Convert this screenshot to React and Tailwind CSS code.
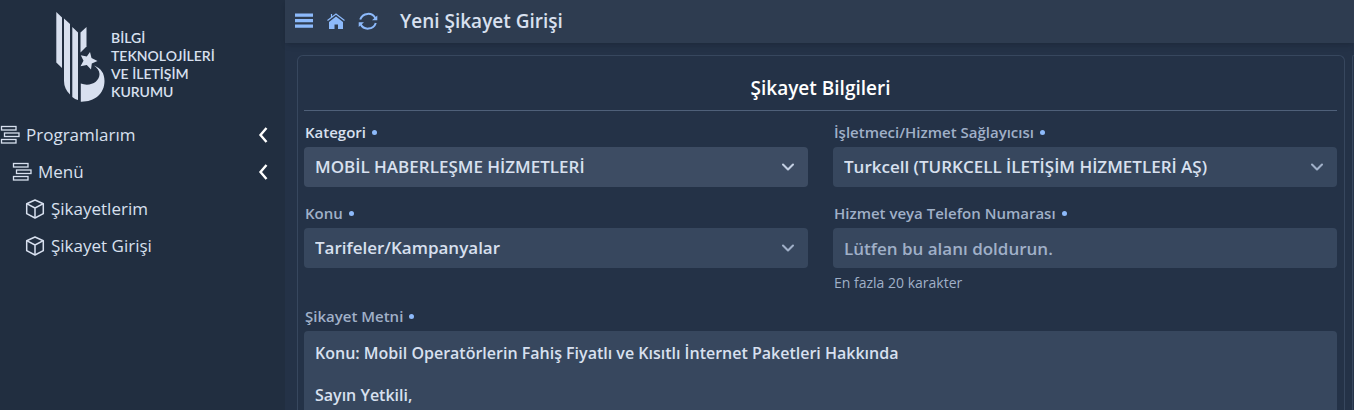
import { ChevronDown } from "lucide-react";

const menuItems = ["Şikayetlerim", "Şikayet Girişi"];

function Logo() {
  return (
    <svg viewBox="0 0 49 90" className="h-[90px] w-[49px] shrink-0" fill="#d8e0ef">
      <path d="M0.300 0L6 5.500V56L0.300 50.500Z" />
      <path d="M8 6.500L14 12V82.500C10 79 8 74 8 69Z" />
      <path d="M16.300 15L22 20.500V88C20 87.500 18 86.500 16.300 85Z" />
      <path d="M24.500 20.500L30.500 15V34.500L24.500 40.500Z" />
      <path d="M34 40L35.500 46L41.500 49L35.800 51.500L35 57.500L30.800 53L24.500 54.300L27.500 48.800L24.800 43.200L30.800 44.500Z" />
      <path d="M38 53.500C45 56.500 48.500 61 48.500 69C48.500 82 38 90 24.800 89.700V71.500C34 75 43.500 70 43.500 62C43.300 58.500 41.500 56 38 53.500Z" />
    </svg>
  );
}

function StackIcon() {
  return (
    <svg viewBox="0 0 20 20" className="size-5 shrink-0" fill="none" stroke="currentColor" strokeWidth="1.300">
      <rect x="1.500" y="1.500" width="14.500" height="3.500" />
      <rect x="4.500" y="8" width="14.500" height="3.500" />
      <rect x="1.500" y="14.500" width="14.500" height="3.500" />
    </svg>
  );
}

function BoxIcon() {
  return (
    <svg viewBox="0 0 20 20" className="size-5 shrink-0" fill="none" stroke="currentColor" strokeWidth="1.500" strokeLinejoin="round">
      <path d="M10 1L18.300 4.700V14.700L10 19L1.700 14.700V4.700Z" />
      <path d="M1.700 4.700L10 9L18.300 4.700M10 9V19" />
    </svg>
  );
}

function MenuGroup({ label, className }) {
  return (
    <button className={`flex h-[37px] w-full items-center gap-1.5 pr-[17px] text-left ${className}`}>
      <StackIcon />
      <span className="flex-1">{label}</span>
      <svg viewBox="0 0 10 16" className="h-4 w-2.5 text-white" fill="none" stroke="currentColor" strokeWidth="2.400">
        <path d="M8.500 1L2.500 8L8.500 15" />
      </svg>
    </button>
  );
}

function Sidebar() {
  return (
    <aside className="w-[285px] shrink-0 bg-[#212e40] text-[17px] text-[#d8e0ef]">
      <div className="flex items-center gap-1.5 pt-3 pb-3.5 pl-14">
        <Logo />
        <p className="pt-4 font-[Lato,sans-serif] text-sm leading-[18px] font-semibold">
          BİLGİ
          <br />
          TEKNOLOJİLERİ
          <br />
          VE İLETİŞİM
          <br />
          KURUMU
        </p>
      </div>
      <nav>
        <MenuGroup label="Programlarım" className="pl-0" />
        <MenuGroup label="Menü" className="pl-3" />
        {menuItems.map((item) => (
          <a key={item} href="#" className="flex h-[37px] items-center gap-1.5 pl-[25px]">
            <BoxIcon />
            {item}
          </a>
        ))}
      </nav>
    </aside>
  );
}

function Header() {
  return (
    <header className="flex h-[43px] shrink-0 items-center gap-3 bg-[#2e3c50] px-[9px] text-[#8dbafb] shadow-md">
      <button aria-label="Menü">
        <svg viewBox="0 0 20 20" className="size-5" fill="currentColor">
          <path d="M1 1.500H19V4.700H1ZM1 7H19V10.200H1ZM1 12.500H19V15.700H1Z" />
        </svg>
      </button>
      <button aria-label="Ana sayfa">
        <svg viewBox="0 0 20 20" className="size-5" fill="currentColor">
          <path d="M10 4.500L17 10V17H12V12.500H8.500V17H3V10Z" />
          <path d="M1.500 8.500L10 2L18.500 8.500M5.500 5V2" fill="none" stroke="currentColor" strokeWidth="1.200" />
        </svg>
      </button>
      <button aria-label="Yenile">
        <svg viewBox="0 0 20 20" className="size-5" fill="none" stroke="currentColor" strokeWidth="2">
          <path d="M2.200 7.500A8.300 8.300 0 0 1 17.500 6.500M17.800 11A8.300 8.300 0 0 1 2.500 12" />
          <path d="M19.300 3.500V8.300H14ZM0.700 15V10.200H6Z" fill="currentColor" stroke="none" />
        </svg>
      </button>
      <h1 className="pl-2.5 text-[19px] font-semibold text-[#d8e0ef]">Yeni Şikayet Girişi</h1>
    </header>
  );
}

function Field({ id, label, className = "text-[#a0b0c8]", children }) {
  return (
    <div>
      <label htmlFor={id} className={`flex h-[26px] items-center gap-1.5 px-px pb-1 text-[15px] font-semibold ${className}`}>
        {label}
        <span className="size-[5px] rounded-full bg-[#8dbafb]" />
      </label>
      {children}
    </div>
  );
}

function Select({ id, option, className = "bg-[#37475e]", arrow = "text-[#a0b0c8]" }) {
  return (
    <div className="grid items-center">
      <select
        id={id}
        className={`col-start-1 row-start-1 h-10 w-full appearance-none rounded px-[11px] text-[17px] font-semibold text-[#d8e0ef] ${className}`}
      >
        <option>{option}</option>
      </select>
      <ChevronDown
        className={`pointer-events-none col-start-1 row-start-1 mr-2.5 size-5 justify-self-end ${arrow}`}
        strokeWidth={2.5}
      />
    </div>
  );
}

export default function App() {
  return (
    <div className="flex h-screen overflow-hidden bg-[#243247] font-['Open_Sans',sans-serif]">
      <Sidebar />
      <div className="flex min-w-0 flex-1 flex-col">
        <Header />
        <main className="flex flex-1 gap-[7px] pt-3 pl-3">
          <section className="flex-1 rounded-t-md border border-b-0 border-[#37475e] pr-[7px] pl-1.5">
            <h2 className="border-b border-[#4f6079] pt-[18px] pb-2 text-center text-[19px] leading-7 font-semibold text-white">
              Şikayet Bilgileri
            </h2>
            <form className="pt-2.5">
              <div className="grid grid-cols-2 gap-x-[25px] gap-y-[15px]">
                <Field id="category" label="Kategori" className="text-[#d8e0ef]">
                  <Select id="category" option="MOBİL HABERLEŞME HİZMETLERİ" className="bg-[#3d4c63]" arrow="text-[#c3cfe2]" />
                </Field>
                <Field id="provider" label="İşletmeci/Hizmet Sağlayıcısı">
                  <Select id="provider" option="Turkcell (TURKCELL İLETİŞİM HİZMETLERİ AŞ)" />
                </Field>
                <Field id="subject" label="Konu">
                  <Select id="subject" option="Tarifeler/Kampanyalar" />
                </Field>
                <Field id="phone" label="Hizmet veya Telefon Numarası">
                  <input
                    id="phone"
                    maxLength={20}
                    placeholder="Lütfen bu alanı doldurun."
                    className="h-10 w-full rounded bg-[#37475e] px-[11px] text-[17px] font-semibold text-[#d8e0ef] placeholder:text-[#a0b0c8]"
                  />
                  <p className="px-px pt-[5px] text-sm leading-5 text-[#a0b0c8]">En fazla 20 karakter</p>
                </Field>
              </div>
              <div className="pt-3">
                <Field id="text" label="Şikayet Metni">
                  <textarea
                    id="text"
                    rows={12}
                    className="block w-full resize-none rounded bg-[#37475e] px-[11px] py-3 text-base leading-[21px] font-semibold text-[#d8e0ef]"
                    defaultValue={"Konu: Mobil Operatörlerin Fahiş Fiyatlı ve Kısıtlı İnternet Paketleri Hakkında\n\nSayın Yetkili,"}
                  />
                </Field>
              </div>
            </form>
          </section>
          <div className="w-0.5 rounded-tl-md border-t border-l border-[#37475e]" />
        </main>
      </div>
    </div>
  );
}
